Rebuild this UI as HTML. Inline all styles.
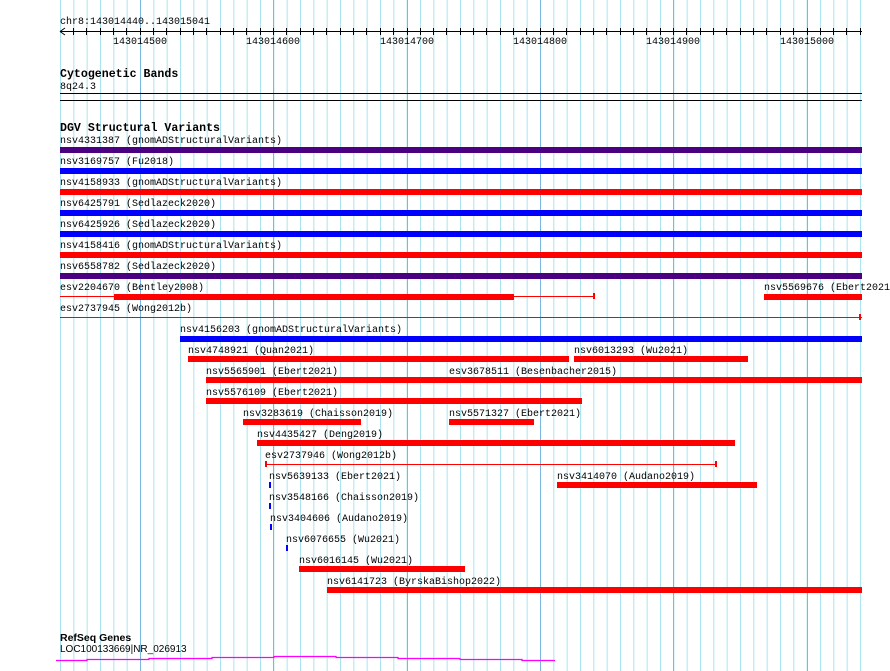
<!DOCTYPE html>
<html><head><meta charset="utf-8"><style>
html,body{margin:0;padding:0;background:#fff;width:890px;height:671px;overflow:hidden}
svg{display:block}
text{font-family:"Liberation Mono",monospace;font-size:10px;fill:#000}
.h{font-weight:bold;font-size:11.6px}
</style></head><body>
<svg width="890" height="671" xmlns="http://www.w3.org/2000/svg">
<defs><pattern id="g" x="60" y="0" width="13.333" height="671" patternUnits="userSpaceOnUse"><rect x="0" y="0" width="1" height="671" fill="#a8e4f0"/></pattern></defs>
<rect x="60" y="0" width="802" height="671" fill="url(#g)"/>
<g fill="#7ab8e0"><rect x="140" y="0" width="1" height="671"/><rect x="273" y="0" width="1" height="671"/><rect x="407" y="0" width="1" height="671"/><rect x="540" y="0" width="1" height="671"/><rect x="673" y="0" width="1" height="671"/><rect x="807" y="0" width="1" height="671"/></g>
<text x="60" y="24">chr8:143014440..143015041</text>
<rect x="60" y="31" width="802" height="1" fill="#000"/>
<path d="M60 31.5 L65 28 M60 31.5 L65 35" stroke="#000" fill="none"/>
<g stroke="#000"><path d="M73.5 28v7M86.5 28v7M100.5 28v7M113.5 28v7M126.5 28v7M140.5 28v7M153.5 28v7M166.5 28v7M180.5 28v7M193.5 28v7M206.5 28v7M220.5 28v7M233.5 28v7M246.5 28v7M260.5 28v7M273.5 28v7M286.5 28v7M300.5 28v7M313.5 28v7M326.5 28v7M340.5 28v7M353.5 28v7M366.5 28v7M380.5 28v7M393.5 28v7M407.5 28v7M420.5 28v7M433.5 28v7M446.5 28v7M460.5 28v7M473.5 28v7M486.5 28v7M500.5 28v7M513.5 28v7M526.5 28v7M540.5 28v7M553.5 28v7M566.5 28v7M580.5 28v7M593.5 28v7M606.5 28v7M620.5 28v7M633.5 28v7M646.5 28v7M660.5 28v7M673.5 28v7M686.5 28v7M700.5 28v7M713.5 28v7M726.5 28v7M740.5 28v7M753.5 28v7M766.5 28v7M780.5 28v7M793.5 28v7M807.5 28v7M820.5 28v7M833.5 28v7M846.5 28v7M860.5 28v7"/></g>
<g text-anchor="middle"><text x="140" y="44">143014500</text><text x="273" y="44">143014600</text><text x="407" y="44">143014700</text><text x="540" y="44">143014800</text><text x="673" y="44">143014900</text><text x="807" y="44">143015000</text></g>
<text class="h" x="60" y="77">Cytogenetic Bands</text>
<text x="60" y="89">8q24.3</text>
<rect x="60" y="93" width="802" height="1" fill="#000"/>
<rect x="60" y="100" width="802" height="1" fill="#000"/>
<text class="h" x="60" y="131">DGV Structural Variants</text>
<text x="60" y="143">nsv4331387 (gnomADStructuralVariants)</text>
<rect x="60" y="147" width="802" height="6" fill="#4b0082"/>
<text x="60" y="164">nsv3169757 (Fu2018)</text>
<rect x="60" y="168" width="802" height="6" fill="#0000ff"/>
<text x="60" y="185">nsv4158933 (gnomADStructuralVariants)</text>
<rect x="60" y="189" width="802" height="6" fill="#ff0000"/>
<text x="60" y="206">nsv6425791 (Sedlazeck2020)</text>
<rect x="60" y="210" width="802" height="6" fill="#0000ff"/>
<text x="60" y="227">nsv6425926 (Sedlazeck2020)</text>
<rect x="60" y="231" width="802" height="6" fill="#0000ff"/>
<text x="60" y="248">nsv4158416 (gnomADStructuralVariants)</text>
<rect x="60" y="252" width="802" height="6" fill="#ff0000"/>
<text x="60" y="269">nsv6558782 (Sedlazeck2020)</text>
<rect x="60" y="273" width="802" height="6" fill="#4b0082"/>
<g fill="#ff0000">
<rect x="60" y="296" width="534" height="1"/><rect x="114" y="294" width="400" height="6"/><rect x="593" y="293" width="2" height="6"/>
<rect x="764" y="294" width="98" height="6"/>
<rect x="60" y="317" width="802" height="1"/><rect x="859" y="314" width="2" height="6"/>
<rect x="188" y="356" width="381" height="6"/><rect x="574" y="356" width="174" height="6"/>
<rect x="206" y="377" width="363" height="6"/><rect x="449" y="377" width="413" height="6"/>
<rect x="206" y="398" width="376" height="6"/>
<rect x="243" y="419" width="118" height="6"/><rect x="449" y="419" width="85" height="6"/>
<rect x="257" y="440" width="478" height="6"/>
<rect x="265" y="464" width="451" height="1"/><rect x="265" y="461" width="2" height="6"/><rect x="715" y="461" width="2" height="6"/>
<rect x="557" y="482" width="200" height="6"/>
<rect x="299" y="566" width="166" height="6"/>
<rect x="327" y="587" width="535" height="6"/>
</g>
<text x="60" y="290">esv2204670 (Bentley2008)</text>
<text x="764" y="290">nsv5569676 (Ebert2021</text>
<text x="60" y="311">esv2737945 (Wong2012b)</text>
<text x="180" y="332">nsv4156203 (gnomADStructuralVariants)</text>
<rect x="180" y="336" width="682" height="6" fill="#0000ff"/>
<text x="188" y="353">nsv4748921 (Quan2021)</text>
<text x="574" y="353">nsv6013293 (Wu2021)</text>
<text x="206" y="374">nsv5565901 (Ebert2021)</text>
<text x="449" y="374">esv3678511 (Besenbacher2015)</text>
<text x="206" y="395">nsv5576109 (Ebert2021)</text>
<text x="243" y="416">nsv3283619 (Chaisson2019)</text>
<text x="449" y="416">nsv5571327 (Ebert2021)</text>
<text x="257" y="437">nsv4435427 (Deng2019)</text>
<text x="265" y="458">esv2737946 (Wong2012b)</text>
<text x="269" y="479">nsv5639133 (Ebert2021)</text>
<text x="557" y="479">nsv3414070 (Audano2019)</text>
<text x="269" y="500">nsv3548166 (Chaisson2019)</text>
<text x="270" y="521">nsv3404606 (Audano2019)</text>
<text x="286" y="542">nsv6076655 (Wu2021)</text>
<text x="299" y="563">nsv6016145 (Wu2021)</text>
<text x="327" y="584">nsv6141723 (ByrskaBishop2022)</text>
<g fill="#0000ff"><rect x="269" y="482" width="2" height="6"/><rect x="269" y="503" width="2" height="6"/><rect x="270" y="524" width="2" height="6"/><rect x="286" y="545" width="2" height="6"/></g>
<text x="60" y="641" style="font-family:'Liberation Sans',sans-serif;font-weight:bold;font-size:10.5px">RefSeq Genes</text>
<text x="60" y="652" style="font-family:'Liberation Sans',sans-serif;font-size:10px">LOC100133669|NR_026913</text>
<path d="M56 660.5H87V659.5H149V658.5H212V657.5H274V656.5H336V657.5H398V658.5H460V659.5H522V660.5H555" stroke="#ff00ff" stroke-width="1.3" fill="none"/>
</svg>
</body></html>
